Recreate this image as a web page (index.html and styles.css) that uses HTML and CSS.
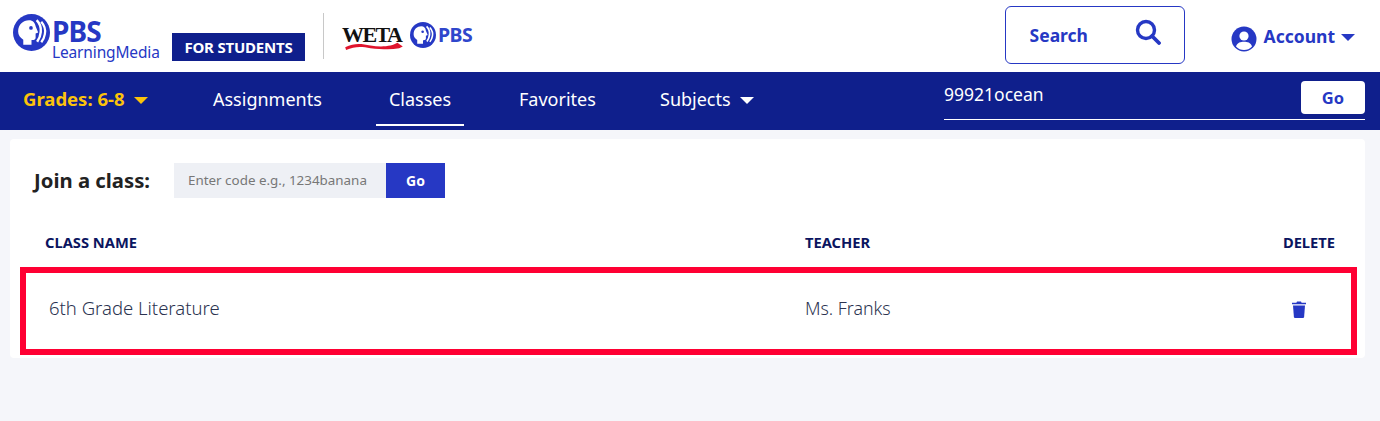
FILE: index.html
```html
<!DOCTYPE html>
<html lang="en">
<head>
  <meta charset="UTF-8" />
  <title>PBS LearningMedia - Classes</title>
  <link rel="stylesheet" href="styles.css">
</head>
<body>

  <header class="site-header">
    <div class="logo">
      <svg class="pbs-head pbs-head-big" viewBox="0 0 36 36">
        <use href="#pbs-mark"/>
      </svg>
      <div class="logo-text">
        <span class="logo-pbs">PBS</span>
        <span class="logo-lm">LearningMedia</span>
      </div>
    </div>
    <span class="students-badge">FOR STUDENTS</span>
    <span class="header-divider"></span>
    <div class="station">
      <div class="weta">
        <span class="weta-name">WETA</span>
        <svg class="weta-swoosh" viewBox="0 0 64 10">
          <path d="M0 7 C10 2 18 3 28 5 C40 7 52 6 58 2 L64 6 L60 8 C50 10 40 9 28 8 C18 6 10 6 1 10 Z" fill="#e0152d"/>
        </svg>
      </div>
      <svg class="pbs-head pbs-head-small" viewBox="0 0 36 36">
        <use href="#pbs-mark"/>
      </svg>
      <span class="station-pbs">PBS</span>
    </div>

    <div class="header-right">
      <button class="search-box">
        <span>Search</span>
        <svg class="search-icon" viewBox="0 0 26 26">
          <circle cx="11" cy="11" r="8.5" fill="none" stroke="#2638c4" stroke-width="3.4"/>
          <path d="M17 17 L24 24" stroke="#2638c4" stroke-width="3.8" stroke-linecap="round"/>
        </svg>
      </button>
      <div class="account">
        <svg class="account-icon" viewBox="0 0 26 26">
          <circle cx="13" cy="13" r="12.5" fill="#2638c4"/>
          <circle cx="13" cy="10" r="4.6" fill="#fff"/>
          <path d="M5 20.5 C6.5 16.5 9.5 15.8 13 15.8 C16.500 15.8 19.500 16.500 21 20.500 C19 23 16 24 13 24 C10 24 7 23 5 20.500 Z" fill="#fff"/>
        </svg>
        <span>Account</span>
        <span class="caret account-caret"></span>
      </div>
    </div>
  </header>

  <nav class="main-nav">
    <a class="grades" href="#">Grades: 6-8 <span class="caret"></span></a>
    <a class="nav-link nav-assignments" href="#">Assignments</a>
    <a class="nav-link nav-classes" href="#">Classes</a>
    <a class="nav-link nav-favorites" href="#">Favorites</a>
    <a class="nav-link nav-subjects" href="#">Subjects <span class="caret"></span></a>
    <form class="nav-code">
      <span class="nav-code-value">99921ocean</span>
      <button type="button" class="nav-go">Go</button>
    </form>
  </nav>

  <main class="card">
    <div class="join-row">
      <span class="join-label">Join a class:</span>
      <div class="join-form">
        <span class="join-input">Enter code e.g., 1234banana</span>
        <button type="button" class="join-go">Go</button>
      </div>
    </div>

    <div class="class-head">
      <span>CLASS NAME</span>
      <span>TEACHER</span>
      <span class="col-delete">DELETE</span>
    </div>

    <div class="class-row">
      <span class="class-name">6th Grade Literature</span>
      <span>Ms. Franks</span>
      <svg class="trash" viewBox="0 0 14 17">
        <path d="M5 0.500 H9 L9.600 1.700 H14 V3.300 H0 V1.700 H4.400 Z" fill="#2638c4"/>
        <path d="M1 4.400 H13 L12.100 16 C12 16.600 11.600 17 11 17 H3 C2.400 17 2 16.600 1.900 16 Z" fill="#2638c4"/>
      </svg>
    </div>
  </main>

  <!-- shared PBS head mark -->
  <svg class="defs" width="0" height="0">
    <defs>
      <g id="pbs-mark">
        <circle cx="18" cy="18" r="18" fill="#2638c4"/>
        <path d="M5 17 C5 10 10 6 15.500 6 C19.500 6 21.500 8.500 22 12 L24.500 18 L22 19 L22 23 C22 25 20 25.500 18 25.200 L18 30 L10 30 L10 25 C7 23 5 20.500 5 17 Z" fill="#fff"/>
        <circle cx="17.500" cy="13.500" r="1.800" fill="#2638c4"/>
        <path d="M23 6 C26 9 27.500 13 27 17.500 C26.800 21 25.500 24 23.500 27" fill="none" stroke="#fff" stroke-width="2.400"/>
        <path d="M27.500 7.500 C30.500 11 32 15 31 19.500 C30.500 23 29 25.500 27.500 27.500" fill="none" stroke="#fff" stroke-width="2.200"/>
      </g>
    </defs>
  </svg>

</body>
</html>
```

FILE: styles.css
```css
body {
  font-family: "Noto Sans", "Open Sans", sans-serif;
  background-color: #f5f6fa;
  margin: 0;
  padding: 0;
  color: #222;
}

button {
  font-family: inherit;
  cursor: pointer;
}

.defs {
  display: block;
}

/* Top header */
.site-header {
  display: flex;
  align-items: flex-start;
  height: 72px;
  background: white;
  padding-left: 13px;
  box-sizing: border-box;
}

.logo {
  display: flex;
  margin-top: 14px;
  width: 147px;
  flex-shrink: 0;
  color: #2638c4;
}

.pbs-head-big {
  width: 37px;
  height: 37px;
  flex-shrink: 0;
}

.logo-text {
  display: flex;
  flex-direction: column;
  margin-left: 2px;
}

.logo-pbs {
  font-size: 28px;
  font-weight: 700;
  line-height: 24px;
  letter-spacing: -0.9px;
  margin-top: 5px;
}

.logo-lm {
  font-size: 15.5px;
  line-height: 17px;
  margin-top: 1px;
  white-space: nowrap;
  letter-spacing: -0.15px;
}

.students-badge {
  margin-left: 12px;
  margin-top: 33px;
  width: 133px;
  height: 28px;
  background: #0f1f8c;
  color: white;
  font-size: 15px;
  font-weight: 700;
  line-height: 28px;
  text-align: center;
  letter-spacing: -0.2px;
}

.header-divider {
  width: 1px;
  height: 46px;
  margin: 13px 18px 0 18px;
  background: #c8c8c8;
}

.station {
  display: flex;
  align-items: flex-start;
  margin-top: 22px;
}

.weta {
  position: relative;
  width: 64px;
  height: 28px;
}

.weta-name {
  font-family: "Liberation Serif", serif;
  font-size: 22px;
  font-weight: 700;
  line-height: 26px;
  color: #111;
  letter-spacing: -1.6px;
}

.weta-swoosh {
  position: absolute;
  left: 0;
  top: 19px;
  width: 64px;
  height: 9px;
}

.pbs-head-small {
  width: 26px;
  height: 26px;
  margin-left: 4px;
}

.station-pbs {
  font-size: 19.5px;
  font-weight: 700;
  line-height: 26px;
  color: #2f47cc;
  margin-left: 2px;
  letter-spacing: -0.5px;
}

.header-right {
  display: flex;
  align-items: flex-start;
  margin-left: auto;
  margin-right: 25px;
}

.search-box {
  display: flex;
  align-items: center;
  justify-content: space-between;
  width: 180px;
  height: 58px;
  margin-top: 6px;
  padding: 0 23px 0 24px;
  background: white;
  border: 1px solid #2638c4;
  border-radius: 6px;
  color: #2638c4;
  font-size: 17.5px;
  font-weight: 700;
}

.search-icon {
  width: 26px;
  height: 26px;
  margin-top: -6px;
}

.account {
  display: flex;
  align-items: flex-start;
  margin-top: 23px;
  margin-left: 46px;
  color: #2638c4;
  font-size: 17.5px;
  font-weight: 700;
  line-height: 26px;
}

.account-icon {
  width: 26px;
  height: 26px;
  margin-right: 7px;
  margin-top: 3px;
}

.caret {
  display: inline-block;
  width: 0;
  height: 0;
  border-left: 7px solid transparent;
  border-right: 7px solid transparent;
  border-top: 7px solid currentColor;
  margin-left: 6px;
  vertical-align: 2px;
}

.account-caret {
  margin-top: 11px;
}

/* Blue nav */
.main-nav {
  display: flex;
  align-items: stretch;
  height: 58px;
  background: #0f1f8c;
  padding-left: 23px;
  padding-right: 15px;
}

.main-nav a {
  color: white;
  text-decoration: none;
  font-size: 18px;
  line-height: 54px;
}

.main-nav .grades {
  color: #fcc30b;
  font-weight: 700;
  font-size: 18.5px;
  width: 190px;
}

.main-nav .grades .caret {
  margin-left: 5px;
}

.nav-assignments {
  width: 163px;
}

.nav-classes {
  width: 88px;
  margin-right: 55px;
  text-align: center;
  height: 52px;
  border-bottom: 2px solid white;
}

.nav-favorites {
  width: 141px;
}

.nav-subjects {
  width: 284px;
}

.nav-subjects .caret {
  margin-left: 5px;
}

.nav-code {
  display: flex;
  justify-content: space-between;
  flex: 1;
  height: 47px;
  margin: 0;
  border-bottom: 1px solid white;
}

.nav-code-value {
  color: white;
  font-size: 17.5px;
  line-height: 45px;
}

.nav-go {
  width: 64px;
  height: 33px;
  margin-top: 9px;
  background: white;
  color: #2638c4;
  border: none;
  border-radius: 4px;
  font-size: 16.5px;
  font-weight: 700;
}

/* Card */
.card {
  width: 1355px;
  height: 219px;
  margin: 9px 0 0 10px;
  background: white;
  border-radius: 4px;
  padding: 24px 8px 0 10px;
  box-sizing: border-box;
}

.join-row {
  display: flex;
  align-items: center;
  padding-left: 14px;
}

.join-label {
  font-size: 20.3px;
  font-weight: 700;
  line-height: 26px;
  width: 140px;
  margin-top: -2px;
  white-space: nowrap;
}

.join-form {
  display: flex;
  height: 35px;
}

.join-input {
  width: 212px;
  background: #eef0f5;
  color: #777;
  font-size: 13.4px;
  line-height: 35px;
  padding-left: 14px;
  box-sizing: border-box;
  white-space: nowrap;
}

.join-go {
  width: 59px;
  background: #2638c4;
  color: white;
  border: none;
  font-size: 14px;
  font-weight: 700;
}

.class-head {
  display: grid;
  grid-template-columns: 760px 1fr auto;
  padding: 0 22px 0 25px;
  margin-top: 34px;
  color: #0b1560;
  font-size: 14.7px;
  font-weight: 700;
  line-height: 20px;
}

.class-row {
  display: grid;
  grid-template-columns: 756px 1fr auto;
  align-items: center;
  height: 88px;
  margin-top: 15px;
  padding: 0 45px 7px 23px;
  border: 6px solid #ff0033;
  box-sizing: border-box;
  color: #2b3350;
  font-size: 17.8px;
  font-weight: 300;
}

.class-name {
  font-size: 18.5px;
}

.trash {
  width: 14px;
  height: 17px;
  margin-top: 3px;
}
```
